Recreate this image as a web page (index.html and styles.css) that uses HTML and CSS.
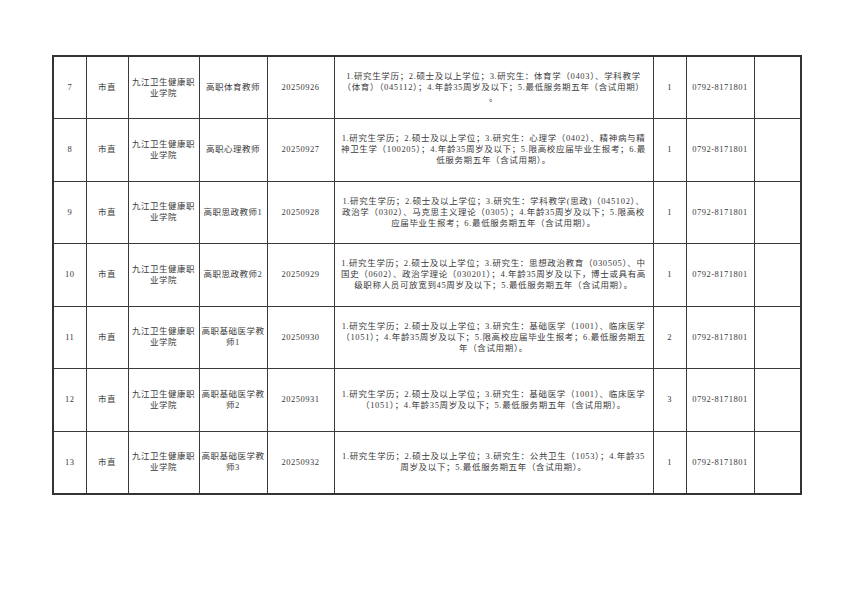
FILE: index.html
```html
<!DOCTYPE html>
<html lang="zh-CN">
<head>
<meta charset="utf-8">
<title>岗位表</title>
<link rel="stylesheet" href="styles.css">
</head>
<body>
<div class="page">
<table class="jobs">
<colgroup>
<col class="c-no"><col class="c-area"><col class="c-unit"><col class="c-post"><col class="c-code"><col class="c-req"><col class="c-num"><col class="c-tel"><col class="c-note">
</colgroup>
<tbody>
<tr>
<td>7</td><td>市直</td><td>九江卫生健康职业学院</td><td>高职体育教师</td><td>20250926</td>
<td class="req">1.研究生学历；2.硕士及以上学位；3.研究生：体育学（0403）、学科教学<br>（体育）（045112）；4.年龄35周岁及以下；5.最低服务期五年（含试用期）<br>。</td>
<td>1</td><td>0792-8171801</td><td></td>
</tr>
<tr>
<td>8</td><td>市直</td><td>九江卫生健康职业学院</td><td>高职心理教师</td><td>20250927</td>
<td class="req">1.研究生学历；2.硕士及以上学位；3.研究生：心理学（0402）、精神病与精<br>神卫生学（100205）；4.年龄35周岁及以下；5.限高校应届毕业生报考；6.最<br>低服务期五年（含试用期）。</td>
<td>1</td><td>0792-8171801</td><td></td>
</tr>
<tr>
<td>9</td><td>市直</td><td>九江卫生健康职业学院</td><td>高职思政教师1</td><td>20250928</td>
<td class="req">1.研究生学历；2.硕士及以上学位；3.研究生：学科教学(思政)（045102）、<br>政治学（0302）、马克思主义理论（0305）；4.年龄35周岁及以下；5.限高校<br>应届毕业生报考；6.最低服务期五年（含试用期）。</td>
<td>1</td><td>0792-8171801</td><td></td>
</tr>
<tr>
<td>10</td><td>市直</td><td>九江卫生健康职业学院</td><td>高职思政教师2</td><td>20250929</td>
<td class="req">1.研究生学历；2.硕士及以上学位；3.研究生：思想政治教育（030505）、中<br>国史（0602）、政治学理论（030201）；4.年龄35周岁及以下，博士或具有高<br>级职称人员可放宽到45周岁及以下；5.最低服务期五年（含试用期）。</td>
<td>1</td><td>0792-8171801</td><td></td>
</tr>
<tr>
<td>11</td><td>市直</td><td>九江卫生健康职业学院</td><td>高职基础医学教师1</td><td>20250930</td>
<td class="req">1.研究生学历；2.硕士及以上学位；3.研究生：基础医学（1001）、临床医学<br>（1051）；4.年龄35周岁及以下；5.限高校应届毕业生报考；6.最低服务期五<br>年（含试用期）。</td>
<td>2</td><td>0792-8171801</td><td></td>
</tr>
<tr>
<td>12</td><td>市直</td><td>九江卫生健康职业学院</td><td>高职基础医学教师2</td><td>20250931</td>
<td class="req">1.研究生学历；2.硕士及以上学位；3.研究生：基础医学（1001）、临床医学<br>（1051）；4.年龄35周岁及以下；5.最低服务期五年（含试用期）。</td>
<td>3</td><td>0792-8171801</td><td></td>
</tr>
<tr>
<td>13</td><td>市直</td><td>九江卫生健康职业学院</td><td>高职基础医学教师3</td><td>20250932</td>
<td class="req">1.研究生学历；2.硕士及以上学位；3.研究生：公共卫生（1053）；4.年龄35<br>周岁及以下；5.最低服务期五年（含试用期）。</td>
<td>1</td><td>0792-8171801</td><td></td>
</tr>
</tbody>
</table>
</div>
</body>
</html>
```

FILE: styles.css
```css
html, body {
  margin: 0;
  padding: 0;
  background: #ffffff;
}

.page {
  padding: 55px 0 0 52px;
}

.jobs {
  border-collapse: collapse;
  table-layout: fixed;
  width: 748px;
  border: 2px solid #333;
  font-family: "Liberation Serif", "Noto Sans CJK SC", serif;
  font-size: 8.5px;
  line-height: 11px;
  letter-spacing: 0.5px;
  color: #3a3a3a;
}

.c-no { width: 33px; }
.c-area { width: 42px; }
.c-unit { width: 71px; }
.c-post { width: 68px; }
.c-code { width: 67px; }
.c-req { width: 319px; }
.c-num { width: 33px; }
.c-tel { width: 68px; }
.c-note { width: 47px; }

.jobs tr {
  height: 62.5px;
}

.jobs td {
  border: 1.5px solid #3a3a3a;
  text-align: center;
  vertical-align: middle;
  padding: 0 1px;
}

.jobs td.req {
  padding: 0 4px;
  letter-spacing: 0.65px;
  white-space: nowrap;
}
```
